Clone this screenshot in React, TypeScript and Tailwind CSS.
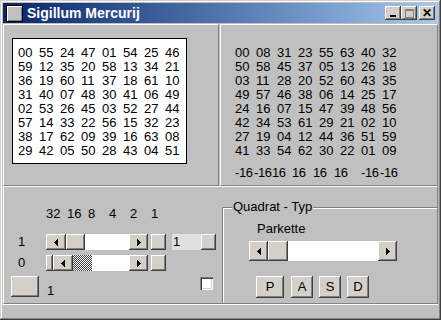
import React from "react";

const leftGrid = [
  ["00", "55", "24", "47", "01", "54", "25", "46"],
  ["59", "12", "35", "20", "58", "13", "34", "21"],
  ["36", "19", "60", "11", "37", "18", "61", "10"],
  ["31", "40", "07", "48", "30", "41", "06", "49"],
  ["02", "53", "26", "45", "03", "52", "27", "44"],
  ["57", "14", "33", "22", "56", "15", "32", "23"],
  ["38", "17", "62", "09", "39", "16", "63", "08"],
  ["29", "42", "05", "50", "28", "43", "04", "51"],
];

const rightGrid = [
  ["00", "08", "31", "23", "55", "63", "40", "32"],
  ["50", "58", "45", "37", "05", "13", "26", "18"],
  ["03", "11", "28", "20", "52", "60", "43", "35"],
  ["49", "57", "46", "38", "06", "14", "25", "17"],
  ["24", "16", "07", "15", "47", "39", "48", "56"],
  ["42", "34", "53", "61", "29", "21", "02", "10"],
  ["27", "19", "04", "12", "44", "36", "51", "59"],
  ["41", "33", "54", "62", "30", "22", "01", "09"],
];

// column sums under the right square, spaced as in the original
const sums = [
  { v: "-16", w: "w-[19px]" },
  { v: "-16", w: "w-[18px]" },
  { v: "16", w: "w-[20px]" },
  { v: "16", w: "w-[21px]" },
  { v: "16", w: "w-[21px]" },
  { v: "16", w: "w-[27px]" },
  { v: "-16", w: "w-[19px]" },
  { v: "-16", w: "w-[21px]" },
];

const raised =
  "bg-[#d4d0c8] shadow-[inset_-1px_-1px_0_#404040,inset_1px_1px_0_#ffffff,inset_-2px_-2px_0_#808080]";

const Arrow = ({ dir }: { dir: "l" | "r" }) => (
  <svg width="4" height="7" viewBox="0 0 4 7" shapeRendering="crispEdges">
    {dir === "l" ? (
      <>
        <rect x="0" y="3" width="1" height="1" />
        <rect x="1" y="2" width="1" height="3" />
        <rect x="2" y="1" width="1" height="5" />
        <rect x="3" y="0" width="1" height="7" />
      </>
    ) : (
      <>
        <rect x="3" y="3" width="1" height="1" />
        <rect x="2" y="2" width="1" height="3" />
        <rect x="1" y="1" width="1" height="5" />
        <rect x="0" y="0" width="1" height="7" />
      </>
    )}
  </svg>
);

const Grid = ({ rows }: { rows: string[][] }) => (
  <div className="flex flex-col">
    {rows.map((row, i) => (
      <div key={i} className="flex h-[14px] leading-[14px]">
        {row.map((n, j) => (
          <span key={j} className="w-[21px]">
            {n}
          </span>
        ))}
      </div>
    ))}
  </div>
);

const CaptionBtn = ({ children, className = "" }: { children: React.ReactNode; className?: string }) => (
  <div className={`flex h-[14px] w-[16px] items-center justify-center ${raised} ${className}`}>
    {children}
  </div>
);

export default function App() {
  return (
    <div className="h-[320px] w-[441px] overflow-hidden bg-[#c0c0c0] p-[3px] font-['Liberation_Sans',Arial,sans-serif] text-[13px] text-black shadow-[inset_-1px_-1px_0_#404040,inset_1px_1px_0_#d4d0c8,inset_-2px_-2px_0_#808080,inset_2px_2px_0_#ffffff]">
      {/* title bar */}
      <div className="flex h-[20px] items-center bg-gradient-to-r from-[#0a246a] to-[#a6caf0] pl-[3px] pr-[3px]">
        <div className="h-[17px] w-[17px] border border-black bg-[#c0c0c0] shadow-[inset_1px_1px_0_#ffffff,inset_-1px_-1px_0_#808080]" />
        <span className="ml-[4px] text-[14px] font-bold leading-none text-white">Sigillum Mercurij</span>
        <div className="ml-auto flex items-center">
          <CaptionBtn>
            <div className="mt-[6px] h-[2px] w-[6px] bg-black" />
          </CaptionBtn>
          <CaptionBtn>
            <div className="h-[9px] w-[9px] border border-[#808080] border-t-2" />
          </CaptionBtn>
          <CaptionBtn className="ml-[2px]">
            <span className="text-[12px] font-bold leading-none">✕</span>
          </CaptionBtn>
        </div>
      </div>

      {/* upper panels */}
      <div className="mt-[1px] flex h-[162px] gap-[1px]">
        <div className="w-[216px] border border-b-[#808080] border-l-white border-r-[#808080] border-t-white pl-[8px] pt-[13px]">
          <div className="h-[126px] w-[175px] border border-black bg-white pl-[5px] pt-[7px]">
            <Grid rows={leftGrid} />
          </div>
        </div>
        <div className="flex-1 border border-b-[#808080] border-l-white border-r-[#808080] border-t-white pl-[14px] pt-[21px]">
          <Grid rows={rightGrid} />
          <div className="mt-[8px] flex h-[14px] leading-[14px] tracking-[-0.4px]">
            {sums.map((s, i) => (
              <span key={i} className={s.w}>
                {s.v}
              </span>
            ))}
          </div>
        </div>
      </div>

      {/* lower panel */}
      <div className="flex h-[118px] border border-b-[#808080] border-l-white border-r-[#808080] border-t-white">
        <div className="flex w-[218px] flex-col pl-[7px] pt-[20px]">
          <div className="flex h-[14px] pl-[35px] leading-[14px]">
            {["32", "16", "8", "4", "2", "1"].map((b) => (
              <span key={b} className="w-[21px]">
                {b}
              </span>
            ))}
          </div>

          <div className="mt-[13px] flex h-[16px] items-center">
            <span className="w-[35px] pl-[7px]">1</span>
            <div className="flex h-[16px] w-[102px]">
              <div className={`flex w-[20px] items-center justify-center ${raised}`}>
                <Arrow dir="l" />
              </div>
              <div className={`w-[19px] ${raised}`} />
              <div className="flex-1 bg-white" />
              <div className={`flex w-[19px] items-center justify-center ${raised}`}>
                <Arrow dir="r" />
              </div>
            </div>
            <div className={`ml-[3px] h-[16px] w-[15px] ${raised}`} />
            <div className="ml-[6px] h-[16px] w-[29px] bg-[#e0e0e0] pl-[1px] leading-[16px]">1</div>
            <div className={`h-[16px] w-[15px] ${raised}`} />
          </div>

          <div className="mt-[5px] flex h-[16px] items-center">
            <span className="w-[35px] pl-[7px]">0</span>
            <div className="flex h-[16px] w-[102px]">
              <div className={`w-[7px] ${raised}`} />
              <div className={`flex w-[20px] items-center justify-center ${raised}`}>
                <Arrow dir="l" />
              </div>
              <div className="w-[19px] bg-[repeating-conic-gradient(#404040_0_25%,#ffffff_0_50%)] bg-[length:2px_2px]" />
              <div className="flex-1 bg-white" />
              <div className={`flex w-[19px] items-center justify-center ${raised}`}>
                <Arrow dir="r" />
              </div>
            </div>
            <div className={`ml-[3px] h-[16px] w-[15px] ${raised}`} />
          </div>

          <div className="mt-[5px] flex h-[21px] pr-[9px]">
            <div className={`h-[21px] w-[28px] ${raised}`} />
            <span className="ml-[8px] mt-[8px] leading-[14px]">1</span>
            <div className="ml-auto mt-[1px] h-[13px] w-[13px] bg-white shadow-[inset_1px_1px_0_#808080,inset_2px_2px_0_#404040,inset_-1px_-1px_0_#ffffff,inset_-2px_-2px_0_#d4d0c8]" />
          </div>
        </div>

        <div className="relative mt-[20px] flex-1 border-l border-t border-[#808080]">
          <span className="absolute left-[9px] top-[-8px] bg-[#c0c0c0] px-[1px] leading-[14px]">Quadrat - Typ</span>
          <div className="h-full border-l border-t border-white pl-[33px] pt-[13px]">
            <div className="h-[14px] leading-[14px]">Parkette</div>
            <div className="-ml-[8px] mt-[5px] flex h-[20px] w-[148px]">
              <div className={`flex w-[19px] items-center justify-center ${raised}`}>
                <Arrow dir="l" />
              </div>
              <div className={`w-[20px] ${raised}`} />
              <div className="flex-1 bg-white" />
              <div className={`flex w-[19px] items-center justify-center ${raised}`}>
                <Arrow dir="r" />
              </div>
            </div>
            <div className="-ml-[1px] mt-[15px] flex">
              {[
                { l: "P", w: "w-[28px]", m: "" },
                { l: "A", w: "w-[22px]", m: "ml-[7px]" },
                { l: "S", w: "w-[22px]", m: "ml-[6px]" },
                { l: "D", w: "w-[22px]", m: "ml-[6px]" },
              ].map((b) => (
                <div key={b.l} className={`flex h-[22px] items-center justify-center ${b.w} ${b.m} ${raised}`}>
                  {b.l}
                </div>
              ))}
            </div>
          </div>
        </div>
      </div>

      {/* status strip */}
      <div className="h-[13px] border-t border-white" />
    </div>
  );
}
